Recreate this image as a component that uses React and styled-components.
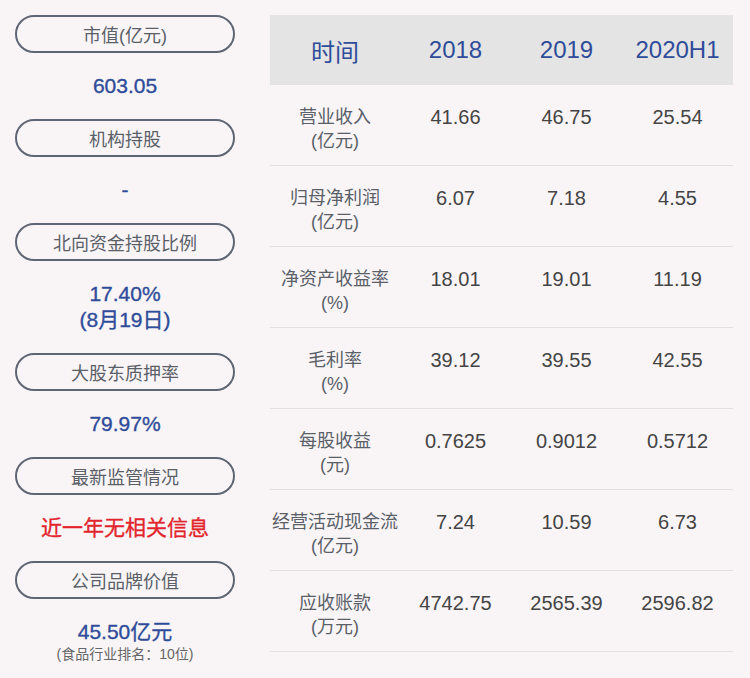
import React from 'react';
import styled, { createGlobalStyle } from 'styled-components';

const GlobalStyle = createGlobalStyle`
  html, body {
    margin: 0;
    padding: 0;
    background: #f9f5f7;
  }
  body {
    font-family: 'Liberation Sans', 'Noto Sans CJK SC', sans-serif;
  }
`;

const Page = styled.div`
  width: 750px;
  height: 678px;
  display: flex;
  align-items: flex-start;
  gap: 35px;
  padding: 15px 17px 0 15px;
  box-sizing: border-box;
  overflow: hidden;
`;

const Side = styled.div`
  width: 220px;
  display: flex;
  flex-direction: column;
  align-items: stretch;
`;

const Pill = styled.div`
  height: 38px;
  box-sizing: border-box;
  border: 2px solid #5e6673;
  border-radius: 19px;
  display: flex;
  align-items: center;
  justify-content: center;
  font-size: 18px;
  color: #5a5f68;
`;

const Value = styled.div`
  padding: 20px 0;
  text-align: center;
  font-size: 21px;
  line-height: 26px;
  color: ${(p) => (p.$alert ? '#e2242c' : '#2f4c99')};
  -webkit-text-stroke: 0.35px ${(p) => (p.$alert ? '#e2242c' : '#2f4c99')};
`;

const Note = styled.div`
  font-size: 14px;
  line-height: 18px;
  color: #666;
  -webkit-text-stroke: 0;
`;

const Table = styled.div`
  width: 463px;
  display: grid;
  grid-template-columns: 130px repeat(3, 111px);
  align-content: start;
`;

const HeadCell = styled.div`
  height: 70px;
  background: #e4e4e4;
  display: flex;
  align-items: center;
  justify-content: center;
  font-size: 24px;
  color: #2f4c99;
`;

const Cell = styled.div`
  height: 81px;
  box-sizing: border-box;
  padding-top: 20px;
  border-bottom: 1px solid #e2e0e1;
  text-align: center;
  font-size: ${(p) => (p.$label ? '18px' : '20px')};
  line-height: 24px;
  color: ${(p) => (p.$label ? '#5a5f68' : '#444')};
  white-space: nowrap;
`;

const side = [
  { title: '市值(亿元)', value: ['603.05'] },
  { title: '机构持股', value: ['-'] },
  { title: '北向资金持股比例', value: ['17.40%', '(8月19日)'] },
  { title: '大股东质押率', value: ['79.97%'] },
  { title: '最新监管情况', value: ['近一年无相关信息'], alert: true },
  { title: '公司品牌价值', value: ['45.50亿元'], note: '(食品行业排名：10位)' },
];

const rows = [
  ['营业收入', '(亿元)', '41.66', '46.75', '25.54'],
  ['归母净利润', '(亿元)', '6.07', '7.18', '4.55'],
  ['净资产收益率', '(%)', '18.01', '19.01', '11.19'],
  ['毛利率', '(%)', '39.12', '39.55', '42.55'],
  ['每股收益', '(元)', '0.7625', '0.9012', '0.5712'],
  ['经营活动现金流', '(亿元)', '7.24', '10.59', '6.73'],
  ['应收账款', '(万元)', '4742.75', '2565.39', '2596.82'],
];

export default function App() {
  return (
    <>
      <GlobalStyle />
      <Page>
        <Side>
          {side.map((s) => (
            <React.Fragment key={s.title}>
              <Pill>{s.title}</Pill>
              <Value $alert={s.alert}>
                {s.value.map((v) => (
                  <div key={v}>{v}</div>
                ))}
                {s.note && <Note>{s.note}</Note>}
              </Value>
            </React.Fragment>
          ))}
        </Side>
        <Table>
          <HeadCell>时间</HeadCell>
          <HeadCell>2018</HeadCell>
          <HeadCell>2019</HeadCell>
          <HeadCell>2020H1</HeadCell>
          {rows.map(([name, unit, a, b, c]) => (
            <React.Fragment key={name}>
              <Cell $label>
                {name}
                <br />
                {unit}
              </Cell>
              <Cell>{a}</Cell>
              <Cell>{b}</Cell>
              <Cell>{c}</Cell>
            </React.Fragment>
          ))}
        </Table>
      </Page>
    </>
  );
}
